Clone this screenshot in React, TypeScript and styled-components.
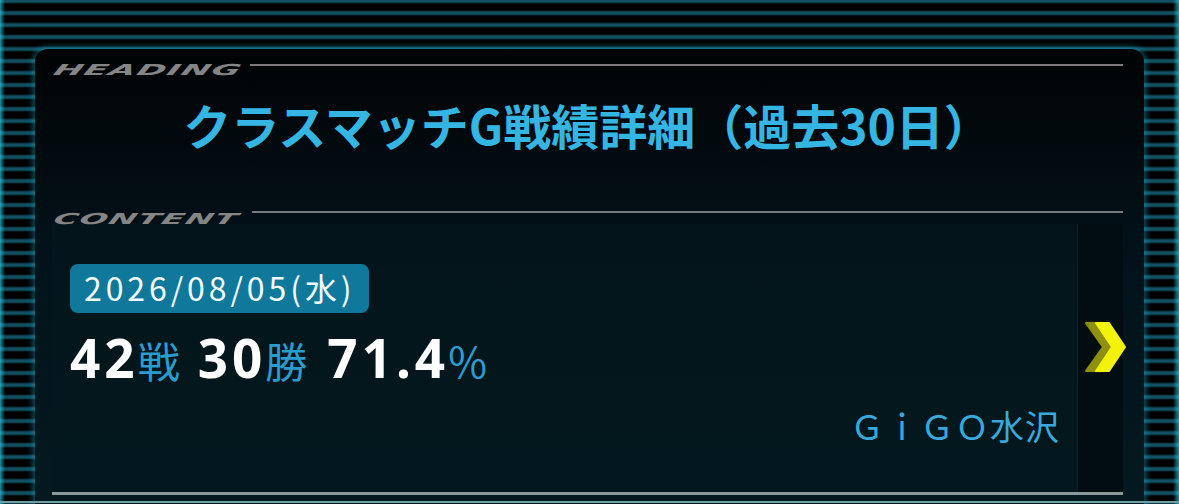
import styled, { createGlobalStyle } from "styled-components";

const GlobalStyle = createGlobalStyle`
  html, body {
    margin: 0;
    padding: 0;
    background: #000;
  }
  body {
    font-family: "Noto Sans CJK JP", "Noto Sans", sans-serif;
    overflow: hidden;
  }
`;

const Page = styled.div`
  position: relative;
  width: 1179px;
  height: 504px;
  box-sizing: border-box;
  padding: 49px 35px 0 35px;
  background:
    linear-gradient(90deg, rgba(40, 190, 220, 0.75) 0, rgba(40, 190, 220, 0) 5px),
    linear-gradient(270deg, rgba(40, 190, 220, 0.75) 0, rgba(40, 190, 220, 0) 6px),
    repeating-linear-gradient(
      180deg,
      rgba(22, 100, 120, 0.8) 0,
      rgba(22, 100, 120, 0.8) 2px,
      #000 4px,
      #000 10px,
      rgba(22, 100, 120, 0.8) 12px
    );
  overflow: hidden;
`;

const Panel = styled.div`
  height: 100%;
  box-sizing: border-box;
  border-radius: 13px 13px 0 0;
  padding: 13px 21px 0 17px;
  background: linear-gradient(180deg, #010304 0%, #03121a 45%, #04191f 100%);
  box-shadow: 0 0 6px 2px rgba(30, 170, 210, 0.5);
  display: flex;
  flex-direction: column;
`;

const SectionHead = styled.div`
  display: flex;
  align-items: flex-start;
  height: 16px;
`;

const SectionLabel = styled.div<{ $w: number; $drop: number; $sx: number }>`
  width: ${(p) => p.$w}px;
  flex: none;
  height: 16px;
  display: flex;
  align-items: flex-start;
  padding-left: 5px;
  box-sizing: border-box;
  span {
    display: block;
    margin-top: ${(p) => p.$drop}px;
    font-family: "DejaVu Sans", sans-serif;
    font-weight: bold;
    font-style: italic;
    font-size: 15px;
    line-height: 15px;
    color: #858585;
    letter-spacing: 0.6px;
    white-space: nowrap;
    transform-origin: left top;
    transform: scaleX(${(p) => p.$sx}) skewX(-10deg);
  }
`;

const Rule = styled.div<{ $top: number }>`
  flex: 1;
  height: 2px;
  margin-top: ${(p) => p.$top}px;
  background: #7a7a7a;
`;

const Title = styled.h1`
  margin: 0;
  height: 132px;
  display: flex;
  align-items: center;
  justify-content: center;
  padding-bottom: 40px;
  box-sizing: border-box;
  font-size: 48px;
  font-weight: 700;
  color: #35b5e2;
`;

const Row = styled.div`
  display: flex;
  height: 268px;
  margin-top: -2px;
`;

const Main = styled.div`
  flex: 1;
  display: flex;
  flex-direction: column;
  padding: 40px 17px 0 18px;
  background: linear-gradient(180deg, #03151b 0%, #03181e 100%);
`;

const DateBadge = styled.div`
  align-self: flex-start;
  height: 49px;
  padding: 0 13px 0 14px;
  border-radius: 8px;
  background: #0f789b;
  color: #f4fbff;
  font-size: 32px;
  line-height: 47px;
  letter-spacing: 3.9px;
`;

const Stats = styled.div`
  margin-top: 8px;
  display: flex;
  align-items: baseline;
  height: 66px;
`;

const Num = styled.span`
  font-family: "Noto Sans", sans-serif;
  font-weight: 700;
  font-size: 53px;
  color: #fff;
  letter-spacing: 4px;
`;

const Unit = styled.span<{ $gap: number }>`
  font-size: 42px;
  color: #2a9ccd;
  margin-left: -1px;
  margin-right: ${(p) => p.$gap}px;
`;

const Shop = styled.div`
  margin-top: 18px;
  text-align: right;
  font-size: 34px;
  line-height: 42px;
  letter-spacing: 1px;
  color: #38a9da;
`;

const ArrowCol = styled.div`
  width: 46px;
  flex: none;
  display: flex;
  align-items: center;
  justify-content: flex-end;
  background: #020d11;
  border-left: 1px solid #0a2026;
  padding-bottom: 22px;
  box-sizing: border-box;
  svg {
    margin-right: -5px;
  }
`;

const BottomRule = styled.div`
  height: 3px;
  background: #8a9999;
`;

const EdgeLine = styled.div`
  position: absolute;
  left: 0;
  right: 0;
  bottom: 1px;
  height: 2px;
  background: #6e9ea4;
`;

const Chevron = () => (
  <svg width="44" height="52" viewBox="0 0 44 52">
    <defs>
      <filter id="glow" x="-30%" y="-30%" width="160%" height="160%">
        <feGaussianBlur stdDeviation="1.2" />
      </filter>
    </defs>
    <polygon
      points="2,2 19,2 37,26 19,50 2,50 20,26"
      fill="#f5f510"
      opacity="0.6"
      filter="url(#glow)"
    />
    <polygon
      points="2,2 16,2 33,26 16,50 2,50 19,26"
      fill="#8f8f10"
      stroke="#8f8f10"
      strokeWidth="2"
      strokeLinejoin="round"
    />
    <polygon
      points="12,2 25,2 41,26 25,50 12,50 28,26"
      fill="#f3f30a"
      stroke="#f3f30a"
      strokeWidth="2"
      strokeLinejoin="round"
    />
  </svg>
);

const App = () => {
  return (
    <Page>
      <GlobalStyle />
      <Panel>
        <SectionHead>
          <SectionLabel $w={198} $drop={1} $sx={2.3}>
            <span>HEADING</span>
          </SectionLabel>
          <Rule $top={2} />
        </SectionHead>
        <Title>クラスマッチG戦績詳細（過去30日）</Title>
        <SectionHead>
          <SectionLabel $w={200} $drop={2} $sx={2.2}>
            <span>CONTENT</span>
          </SectionLabel>
          <Rule $top={1} />
        </SectionHead>
        <Row>
          <Main>
            <DateBadge>2026/08/05(水)</DateBadge>
            <Stats>
              <Num>42</Num>
              <Unit $gap={18}>戦</Unit>
              <Num>30</Num>
              <Unit $gap={20}>勝</Unit>
              <Num>71.4</Num>
              <Unit $gap={0}>%</Unit>
            </Stats>
            <Shop>ＧｉＧＯ水沢</Shop>
          </Main>
          <ArrowCol>
            <Chevron />
          </ArrowCol>
        </Row>
        <BottomRule />
      </Panel>
      <EdgeLine />
    </Page>
  );
};

export default App;
